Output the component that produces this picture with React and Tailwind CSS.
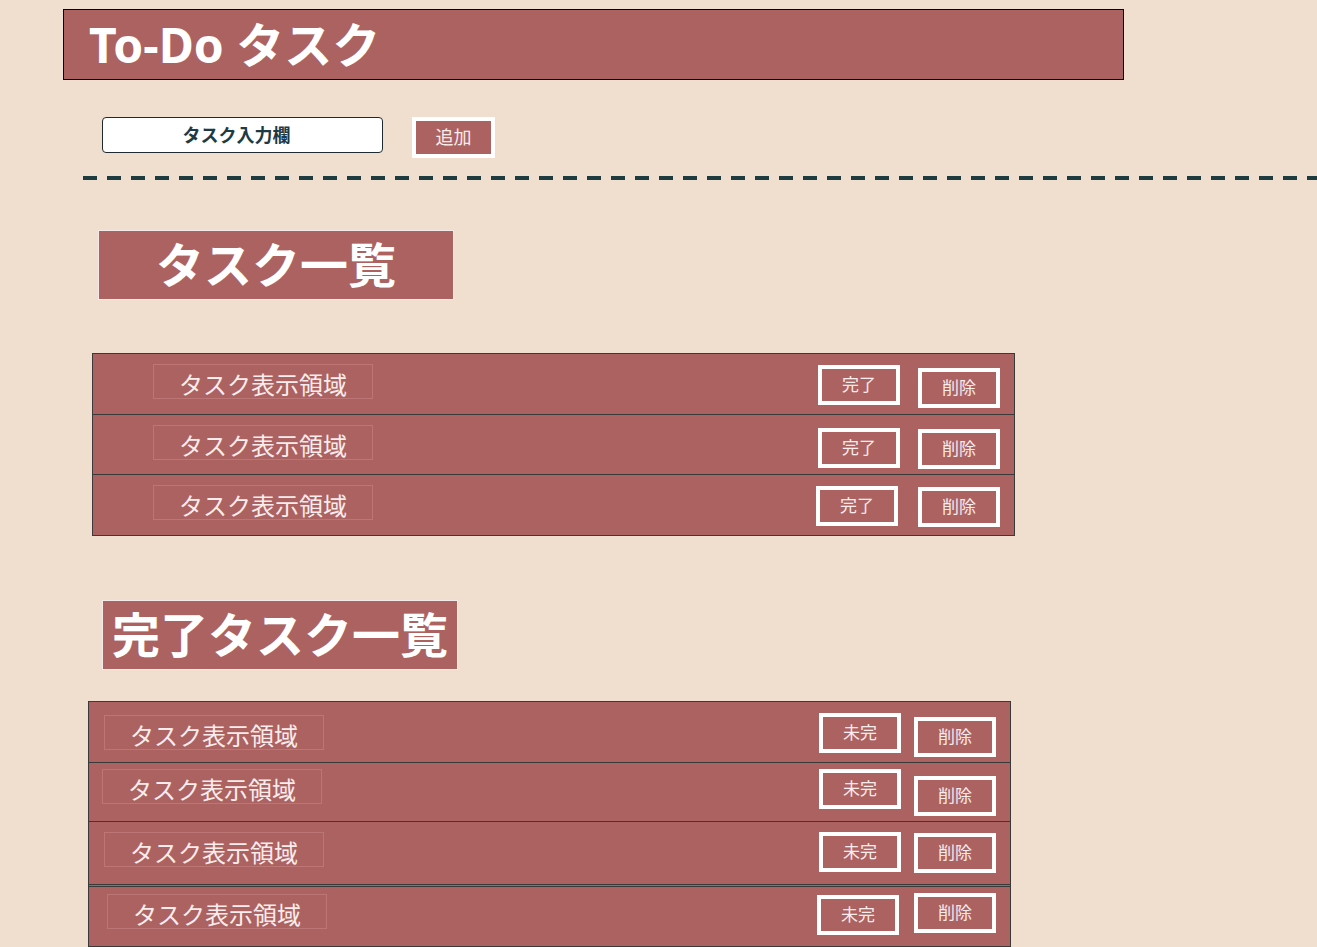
const font = "font-['Noto_Sans','Noto_Sans_CJK_JP',sans-serif]"

const todoRows = [
  { row: 'h-[60px]', text: 'ml-[60px] mt-[10px]', done: 'mt-[11px]', del: 'mt-[14px]', gap: 'gap-[18px]' },
  { row: 'h-[60px] border-t border-[#3a3a3a]', text: 'ml-[60px] mt-[10px]', done: 'mt-[13px]', del: 'mt-[14px]', gap: 'gap-[18px]' },
  { row: 'h-[61px] border-t border-[#3a3a3a]', text: 'ml-[60px] mt-[10px]', done: 'mt-[11px]', del: 'mt-[12px]', gap: 'gap-[20px]' },
]

const doneRows = [
  { row: 'h-[60px]', text: 'ml-[15px] mt-[13px]', undo: 'mt-[11px]', del: 'mt-[15px]', undoMl: 'mr-[13px]' },
  { row: 'h-[59px] border-t border-[#3a3a3a]', text: 'ml-[13px] mt-[6px]', undo: 'mt-[6px]', del: 'mt-[13px]', undoMl: 'mr-[13px]' },
  { row: 'h-[63px] border-t border-[#3a3a3a]', text: 'ml-[15px] mt-[10px]', undo: 'mt-[10px]', del: 'mt-[11px]', undoMl: 'mr-[13px]' },
  { row: 'h-[62px] border-t-[3px] border-double border-[#3a3a3a]', text: 'ml-[18px] mt-[7px]', undo: 'mt-[8px]', del: 'mt-[6px]', undoMl: 'mr-[15px]' },
]

function TaskText ({ className }) {
  return (
    <div className={`flex h-[35px] w-[220px] items-center justify-center border border-[#bd7676] pt-[6px] text-[24px] leading-none text-[#f8ecec] ${className}`}>
      タスク表示領域
    </div>
  )
}

function RowButton ({ label, className }) {
  return (
    <button className={`flex h-[40px] w-[82px] items-center justify-center border-4 border-white bg-[#ad6262] text-[17px] text-[#f8ecec] ${className}`}>
      {label}
    </button>
  )
}

export default function App () {
  return (
    <div className={`min-h-screen bg-[#f0dfcf] pt-[9px] pb-px ${font}`}>
      <header className="ml-[63px] flex h-[71px] w-[1061px] items-center border border-black bg-[#ad6262] pl-[25px]">
        <h1 className="text-[48px] font-bold leading-none text-white">To-Do タスク</h1>
      </header>

      <div className="ml-[102px] mt-[37px] flex items-start gap-[29px]">
        <input
          className="h-[36px] w-[281px] rounded-[4px] border border-[#1e2a30] bg-white pr-[12px] text-center text-[18px] font-bold text-[#1e3a44] placeholder:text-[#1e3a44] outline-none"
          placeholder="タスク入力欄"
        />
        <button className="h-[41px] w-[83px] border-4 border-white bg-[#ad6262] text-[18px] text-[#f8ecec]">追加</button>
      </div>

      <div className="ml-[83px] mt-[18px] h-[4px] bg-[repeating-linear-gradient(90deg,#1e3b40_0_14px,transparent_14px_24px)]" />

      <section className="mt-[50px]">
        <div className="ml-[98px] flex h-[70px] w-[356px] items-center justify-center border border-[#f5eaea] bg-[#ad6262]">
          <h2 className="text-[48px] font-bold leading-none text-white">タスク一覧</h2>
        </div>

        <ul className="ml-[92px] mt-[53px] w-[923px] border border-[#3a3a3a] bg-[#ad6262]">
          {todoRows.map((r, i) => (
            <li key={i} className={`flex items-start ${r.row}`}>
              <TaskText className={r.text} />
              <div className={`ml-auto mr-[14px] flex items-start ${r.gap}`}>
                <RowButton label="完了" className={r.done} />
                <RowButton label="削除" className={r.del} />
              </div>
            </li>
          ))}
        </ul>
      </section>

      <section className="mt-[64px]">
        <div className="ml-[102px] flex h-[70px] w-[356px] items-center justify-center border border-[#f5eaea] bg-[#ad6262]">
          <h2 className="text-[48px] font-bold leading-none text-white">完了タスク一覧</h2>
        </div>

        <ul className="ml-[88px] mt-[31px] w-[923px] border border-[#3a3a3a] bg-[#ad6262]">
          {doneRows.map((r, i) => (
            <li key={i} className={`flex items-start ${r.row}`}>
              <TaskText className={r.text} />
              <div className="ml-auto mr-[14px] flex items-start">
                <RowButton label="未完" className={`${r.undo} ${r.undoMl}`} />
                <RowButton label="削除" className={r.del} />
              </div>
            </li>
          ))}
        </ul>
      </section>
    </div>
  )
}
